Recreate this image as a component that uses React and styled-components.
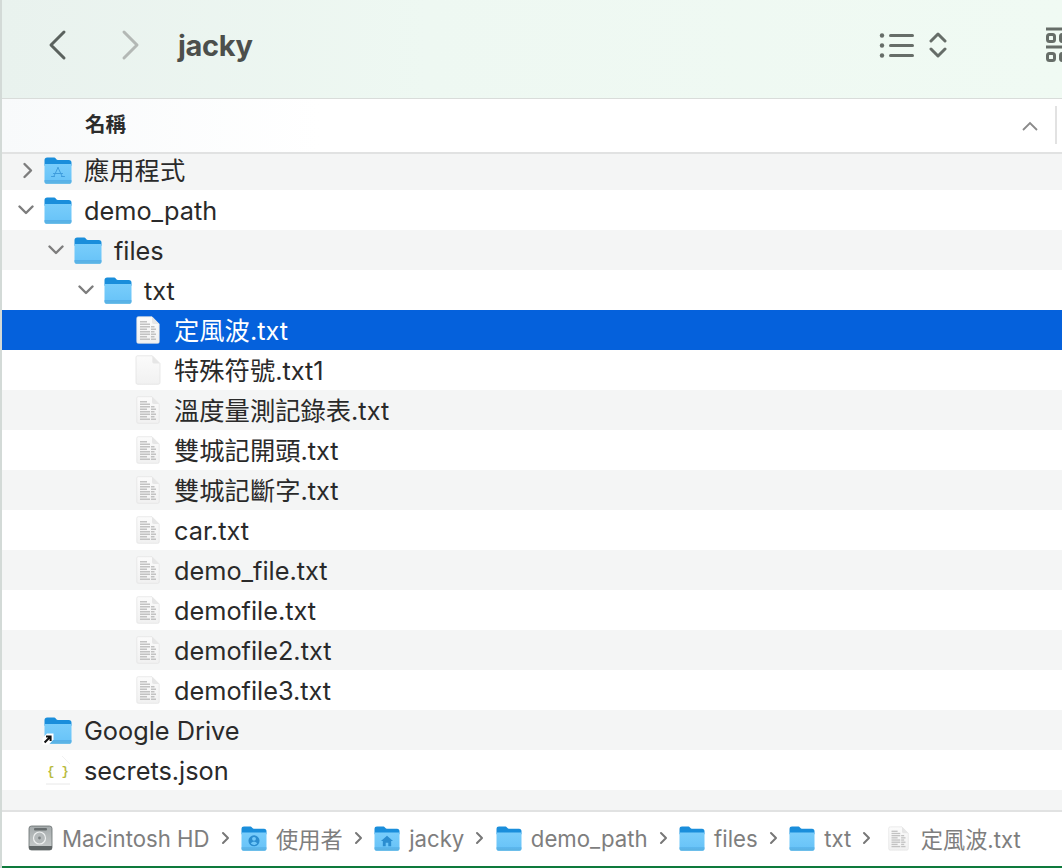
import { useId } from 'react';
import styled, { createGlobalStyle } from 'styled-components';

const GlobalStyle = createGlobalStyle`
  html, body {
    margin: 0;
    padding: 0;
    background: #fff;
  }
  body {
    font-family: Inter, "Noto Sans CJK TC", "Noto Sans", sans-serif;
  }
`

const Window = styled.div`
  width: 1062px;
  height: 868px;
  box-sizing: border-box;
  border-left: 2px solid #d3dad7;
  overflow: hidden;
  display: flex;
  flex-direction: column;
  background: #fff;
`

const Toolbar = styled.div`
  height: 99px;
  flex: none;
  box-sizing: border-box;
  display: flex;
  align-items: center;
  padding: 0 0 8px 45px;
  background: linear-gradient(90deg, #e9f2ee 0%, #eef8f2 40%, #f0faf3 100%);
  border-bottom: 1.5px solid #d9dcda;
`

const NavButton = styled.div`
  width: 22px;
  display: flex;
  margin-right: ${p => p.$gap}px;
`

const Title = styled.div`
  font-size: 29px;
  font-weight: 700;
  color: #4c4f4c;
  letter-spacing: -0.3px;
  flex: 1;
`

const ToolIcon = styled.svg`
  flex: none;
  margin-right: ${p => p.$gap}px;
`

const Header = styled.div`
  height: 55px;
  flex: none;
  box-sizing: border-box;
  display: flex;
  align-items: center;
  padding-left: 83px;
  background: linear-gradient(90deg, #f8fafb 0%, #ffffff 30%);
  border-bottom: 2px solid #e1e2e2;
`

const HeaderLabel = styled.div`
  font-size: 20.5px;
  font-weight: 700;
  color: #2c2c2c;
  flex: 1;
  margin-bottom: 5px;
`

const SortMark = styled.svg`
  margin-right: 17px;
`

const HeaderDivider = styled.div`
  width: 2px;
  height: 38px;
  background: #e2e2e2;
  margin: 0 5px 2px 0;
`

const List = styled.div`
  flex: 1;
  min-height: 0;
  overflow: hidden;
  background: #f4f5f5;
`

const ListInner = styled.div`
  margin-top: -4px;
`

const Row = styled.div`
  height: 40px;
  display: flex;
  align-items: center;
  padding-left: ${p => 16 + p.$depth * 30}px;
  background: ${p => (p.$selected ? '#0561dc' : p.$odd ? '#ffffff' : '#f4f5f5')};
  color: ${p => (p.$selected ? '#ffffff' : '#2a2a2a')};
`

const Disclosure = styled.div`
  width: 26px;
  height: 20px;
  flex: none;
  display: flex;
  align-items: center;
`

const RowIcon = styled.div`
  width: 28px;
  height: 30px;
  flex: none;
  display: flex;
  align-items: center;
  justify-content: center;
  position: relative;
  margin-right: 12px;
`

const RowName = styled.div`
  font-size: 25.3px;
  line-height: 40px;
  padding-top: 1px;
  white-space: nowrap;
`

const PathBar = styled.div`
  height: 56px;
  flex: none;
  box-sizing: border-box;
  display: flex;
  align-items: center;
  padding: 0 0 2px 26px;
  border-top: 2px solid #e1e2e2;
  background: #fff;
`

const Crumb = styled.div`
  display: flex;
  align-items: center;
  gap: 9px;
  font-size: 22.2px;
  color: #7e7e7e;
  white-space: nowrap;
`

const CrumbSep = styled.svg`
  flex: none;
  margin: 0 11.5px 0 2px;
`

const CrumbDoc = styled.span`
  display: flex;
  margin: 0 3px 0 5px;
`

const BottomEdge = styled.div`
  height: 2px;
  flex: none;
  background: #0e7a3c;
`

function Folder({ size = 28, glyph }) {
  const id = useId()
  return (
    <svg width={size} height={Math.round(size * 0.96)} viewBox="0 0 28 27">
      <defs>
        <linearGradient id={id} x1="0" y1="0" x2="0" y2="1">
          <stop offset="0" stopColor="#79cdfb" />
          <stop offset="1" stopColor="#66c2f7" />
        </linearGradient>
      </defs>
      <path d="M.5 3.2C.5 1.4 1.5.5 3.2.5h6.2c1.4 0 1.9.5 2.7 1.4.7.8 1.2 1.1 2.4 1.1h10.3c1.8 0 2.7 1 2.7 2.8v3H.5z" fill="#1a8edb" />
      <path d="M.5 7h27v17.2c0 1.8-1 2.6-2.7 2.6H3.2c-1.7 0-2.7-.8-2.7-2.6z" fill={`url(#${id})`} />
      <rect x=".5" y="23" width="27" height="1" fill="#4ea8e2" opacity="0.7" />
      <path d="M.5 24h27v.4c0 1.6-1 2.4-2.7 2.4H3.2c-1.7 0-2.7-.8-2.7-2.4z" fill="#55addf" opacity="0.75" />
      {glyph === 'apps' && (
        <path d="M14 10.5l-4.2 9M14 10.5l4.2 9M9.5 16.5h9M7.5 19.5h3M17.5 19.5h3" stroke="#3f9ddd" strokeWidth="1" fill="none" strokeLinecap="round" />
      )}
      {glyph === 'user' && (
        <path fill="#2b8dd0" fillRule="evenodd" d="M14 10a6 6 0 1 0 0 12 6 6 0 0 0 0-12zm0 1.8a2.1 2.1 0 1 1 0 4.2 2.1 2.1 0 0 1 0-4.2zm-3.4 7.2c.6-1.3 1.9-1.9 3.4-1.9s2.8.6 3.4 1.9c-.8.9-2.1 1.6-3.4 1.6s-2.6-.7-3.4-1.6z" />
      )}
      {glyph === 'home' && (
        <path d="M14 10.5l-6.5 5.8h2V22h3.1v-3.8h2.8V22h3.1v-5.7h2z" fill="#2b8dd0" />
      )}
    </svg>
  )
}

const docLines = [5, 7.5, 10, 12.5, 15, 17.5, 20, 22.5]

function DocIcon({ width = 24, height = 28, lines = true }) {
  const id = useId()
  return (
    <svg width={width} height={height} viewBox="0 0 24 28">
      <defs>
        <linearGradient id={id} x1="0" y1="0" x2="0" y2="1">
          <stop offset="0" stopColor="#fbfbfb" />
          <stop offset="1" stopColor="#f1f1f1" />
        </linearGradient>
      </defs>
      <path d="M.8 2.4C.8 1.3 1.4.7 2.4.7H16L23.2 8v17.7c0 1-.6 1.6-1.6 1.6H2.4c-1 0-1.6-.6-1.6-1.6z" fill={`url(#${id})`} stroke="#e2e2e2" strokeWidth="0.7" />
      <path d="M16 .7V6c0 1.3.7 2 2 2h5.2z" fill="#e6e6e6" />
      {lines && docLines.map((y, i) => (
        <g key={y} fill="#c2c2c2">
          <rect x="4" y={y} width={i % 3 === 0 ? 7 : 10} height="1.5" />
          <rect x={i < 2 ? 12 : 15} y={y} width={i < 2 ? 0 : i % 2 ? 5 : 3.5} height="1.5" />
        </g>
      ))}
    </svg>
  )
}

function JsonIcon() {
  return (
    <svg width="26" height="30" viewBox="0 0 26 30">
      <path d="M1 1h16l8 8v20H1z" fill="#fff" />
      <path d="M1 29h24" stroke="#e2e2e2" strokeWidth="0.8" />
      <path d="M17 1l8 8" stroke="#eeeeee" strokeWidth="0.8" />
      <text x="13" y="20" textAnchor="middle" fontSize="12" fontWeight="700" fill="#b9bb3f" fontFamily="Liberation Mono, monospace">{'{ }'}</text>
    </svg>
  )
}

const AliasSvg = styled.svg`
  position: absolute;
  left: -2px;
  bottom: 0;
`

function AliasBadge() {
  return (
    <AliasSvg width="12" height="12" viewBox="0 0 12 12">
      <path d="M.5 11.5V5L5 .5h6.5v6L7 11.5z" fill="#fff" />
      <path d="M2.6 9.5L7.8 4.3M4 3.5h4.6v4.6" stroke="#111" strokeWidth="2" fill="none" />
    </AliasSvg>
  )
}

function DiskIcon() {
  const id = useId()
  return (
    <svg width="25" height="26" viewBox="0 0 25 26">
      <defs>
        <linearGradient id={id} x1="0" y1="0" x2="0" y2="1">
          <stop offset="0" stopColor="#a4aaab" />
          <stop offset="1" stopColor="#c9cdcd" />
        </linearGradient>
      </defs>
      <rect x="1" y="1" width="23" height="24" rx="2.5" fill={`url(#${id})`} stroke="#666c6d" strokeWidth="0.8" />
      <rect x="6" y="3" width="13" height="2.5" rx="1" fill="#686e6f" />
      <circle cx="11.5" cy="13" r="6" fill="#b5babb" stroke="#eef0f0" strokeWidth="1.2" />
      <circle cx="11.5" cy="13" r="1.4" fill="#7b8182" />
      <path d="M1 21h23v2c0 1.3-.7 2-2 2H3c-1.3 0-2-.7-2-2z" fill="#5f6566" />
    </svg>
  )
}

function Chevron({ dir, color }) {
  const d = dir === 'down' ? 'M1.5 4.5l6.5 6.5 6.5-6.5' : 'M6.5 2l6.5 6.5L6.5 15'
  return (
    <svg width="16" height="17" viewBox="0 0 16 17">
      <path d={d} fill="none" stroke={color} strokeWidth="2.4" strokeLinecap="round" strokeLinejoin="round" />
    </svg>
  )
}

const rows = [
  { depth: 0, name: '應用程式', kind: 'folder', glyph: 'apps', open: false },
  { depth: 0, name: 'demo_path', kind: 'folder', open: true },
  { depth: 1, name: 'files', kind: 'folder', open: true },
  { depth: 2, name: 'txt', kind: 'folder', open: true },
  { depth: 3, name: '定風波.txt', kind: 'doc', selected: true },
  { depth: 3, name: '特殊符號.txt1', kind: 'blank' },
  { depth: 3, name: '溫度量測記錄表.txt', kind: 'doc' },
  { depth: 3, name: '雙城記開頭.txt', kind: 'doc' },
  { depth: 3, name: '雙城記斷字.txt', kind: 'doc' },
  { depth: 3, name: 'car.txt', kind: 'doc' },
  { depth: 3, name: 'demo_file.txt', kind: 'doc' },
  { depth: 3, name: 'demofile.txt', kind: 'doc' },
  { depth: 3, name: 'demofile2.txt', kind: 'doc' },
  { depth: 3, name: 'demofile3.txt', kind: 'doc' },
  { depth: 0, name: 'Google Drive', kind: 'alias' },
  { depth: 0, name: 'secrets.json', kind: 'json' },
]

const crumbs = [
  { name: 'Macintosh HD', icon: <DiskIcon /> },
  { name: '使用者', icon: <Folder size={26} glyph="user" /> },
  { name: 'jacky', icon: <Folder size={26} glyph="home" /> },
  { name: 'demo_path', icon: <Folder size={26} /> },
  { name: 'files', icon: <Folder size={26} /> },
  { name: 'txt', icon: <Folder size={26} /> },
  { name: '定風波.txt', icon: <CrumbDoc><DocIcon width={21} height={25} /></CrumbDoc> },
]

function rowIcon(row) {
  if (row.kind === 'folder') return <Folder glyph={row.glyph} />
  if (row.kind === 'doc') return <DocIcon />
  if (row.kind === 'blank') return <DocIcon width={26} height={30} lines={false} />
  if (row.kind === 'json') return <JsonIcon />
  return (
    <>
      <Folder />
      <AliasBadge />
    </>
  )
}

function App() {
  return (
    <>
      <GlobalStyle />
      <Window>
        <Toolbar>
          <NavButton $gap={51}>
            <svg width="22" height="32" viewBox="0 0 22 32">
              <path d="M17 3L4 16l13 13" fill="none" stroke="#5b625e" strokeWidth="3" strokeLinecap="round" strokeLinejoin="round" />
            </svg>
          </NavButton>
          <NavButton $gap={36}>
            <svg width="22" height="32" viewBox="0 0 22 32">
              <path d="M4 3l13 13L4 29" fill="none" stroke="#b3b8b5" strokeWidth="3" strokeLinecap="round" strokeLinejoin="round" />
            </svg>
          </NavButton>
          <Title>jacky</Title>
          <ToolIcon $gap={14} width="36" height="26" viewBox="0 0 36 26">
            <g fill="#666d68">
              <circle cx="3" cy="3.5" r="2.2" />
              <circle cx="3" cy="13.5" r="2.2" />
              <circle cx="3" cy="23.5" r="2.2" />
              <rect x="10" y="2" width="25" height="3" rx="1.5" />
              <rect x="10" y="12" width="25" height="3" rx="1.5" />
              <rect x="10" y="22" width="25" height="3" rx="1.5" />
            </g>
          </ToolIcon>
          <ToolIcon $gap={99} width="18" height="28" viewBox="0 0 18 28">
            <path d="M2 10l7-7 7 7M2 18l7 7 7-7" fill="none" stroke="#666d68" strokeWidth="3" strokeLinecap="round" strokeLinejoin="round" />
          </ToolIcon>
          <ToolIcon $gap={-16} width="32" height="36" viewBox="0 0 32 36">
            <g fill="none" stroke="#666d68" strokeWidth="3">
              <path d="M0 2h32M0 20h32" />
              <rect x="1.5" y="7.5" width="7" height="7" rx="2" />
              <rect x="14.5" y="7.5" width="7" height="7" rx="2" />
              <rect x="1.5" y="26.5" width="7" height="7" rx="2" />
              <rect x="14.5" y="26.5" width="7" height="7" rx="2" />
            </g>
          </ToolIcon>
        </Toolbar>
        <Header>
          <HeaderLabel>名稱</HeaderLabel>
          <SortMark width="16" height="10" viewBox="0 0 16 10">
            <path d="M1 9l7-7 7 7" fill="none" stroke="#8a8a8a" strokeWidth="1.8" />
          </SortMark>
          <HeaderDivider />
        </Header>
        <List>
          <ListInner>
            {rows.map((row, i) => (
              <Row key={row.name} $depth={row.depth} $selected={row.selected} $odd={i % 2 === 1}>
                <Disclosure>
                  {row.open !== undefined && (
                    <Chevron dir={row.open ? 'down' : 'right'} color="#7d7d7d" />
                  )}
                </Disclosure>
                <RowIcon>{rowIcon(row)}</RowIcon>
                <RowName>{row.name}</RowName>
              </Row>
            ))}
          </ListInner>
        </List>
        <PathBar>
          {crumbs.map((c, i) => (
            <Crumb key={c.name}>
              {c.icon}
              {c.name}
              {i < crumbs.length - 1 && (
                <CrumbSep width="9" height="14" viewBox="0 0 9 14">
                  <path d="M2 2l5 5-5 5" fill="none" stroke="#777" strokeWidth="2" strokeLinecap="round" strokeLinejoin="round" />
                </CrumbSep>
              )}
            </Crumb>
          ))}
        </PathBar>
        <BottomEdge />
      </Window>
    </>
  )
}

export default App
